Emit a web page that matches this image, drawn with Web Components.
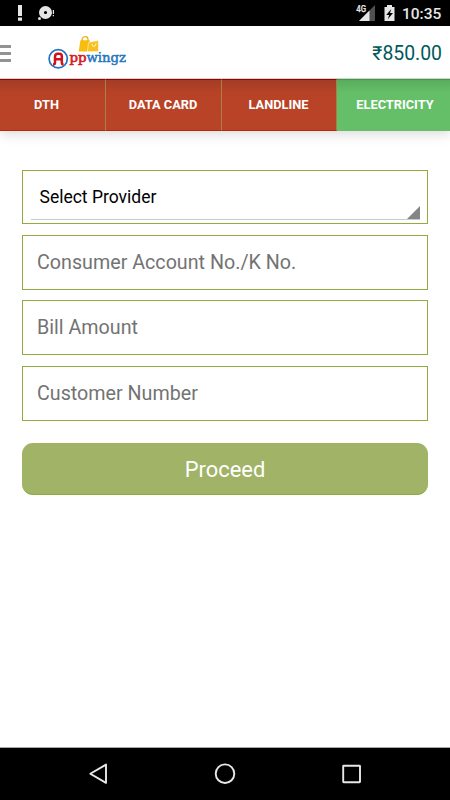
<!DOCTYPE html>
<html lang="en"><head><meta charset="utf-8"><title>Appwingz</title>
<style>html,body{margin:0;height:100%;background:#fff}body{font-family:Roboto,sans-serif;overflow:hidden}</style></head>
<body><bill-app></bill-app>
<script>
const define=(name,html)=>customElements.define(name,class extends HTMLElement{
  constructor(){super();const t=document.createElement('template');t.innerHTML=html;this.attachShadow({mode:'open'}).append(t.content.cloneNode(true));}
});
define('status-bar',`<style>
:host{display:flex;height:26px;background:#000;box-sizing:border-box}
svg{display:block}
.clock{margin:5px 0 0 6px;color:#e6e6e6;font:500 15.5px/18px Roboto,sans-serif;white-space:nowrap}
.net{font:500 9.5px Roboto,sans-serif}
</style>
<svg width="396" height="26" fill="#e6e6e6">
<path d="M18 5h4v11h-4zM18 17.5h4v3.2h-4z"/>
<path fill-rule="evenodd" d="M45.5 6a6.5 6.5 0 1 1 0 13 6.5 6.5 0 0 1 0-13zM45.5 10.9a1.6 1.6 0 1 0 0 3.2 1.6 1.6 0 0 0 0-3.2z"/>
<circle cx="39.5" cy="18.5" r="1.5"/><path d="M52.8 10h1.2v4h-1.2zM52.8 15h1.2v1.2h-1.2z"/>
<path fill="#505050" d="M375 5v16h-16z"/><path d="M369.5 10.5V21H359z"/>
<path fill="#000" d="M355 4h12v9h-12z"/>
<text class="net" x="356.2" y="12.2" textLength="9.8" lengthAdjust="spacingAndGlyphs" stroke="#e6e6e6" stroke-width=".25">4G</text>
<path d="M387 5h5v2h2.5v14h-10V7h2.5z"/><path fill="#000" d="M391.3 9l-5.1 6h3l-1.4 4.2 5.2-6.2h-3z"/>
</svg><span class="clock">10:35</span>`);
define('brand-logo',`<style>:host{display:block;width:80px;height:36px}svg{display:block}text{font-family:"DejaVu Serif",serif;font-weight:700}</style>
<svg width="80" height="36" viewBox="48 34 80 36">
<path fill="#f7bd13" d="M80.4 40.2h9.2v4.2l-2.2 7.2h-8.7z"/>
<path fill="none" stroke="#efb20b" stroke-width="1.3" d="M82.2 42v-3.3q.8-2.4 3.5-2.1 2.3.3 2.3 3V42"/>
<path fill="#f9c01b" stroke="#fff" stroke-width=".5" d="M88.6 42.3l9.8-1.7v11h-11z"/>
<path fill="none" stroke="#fff8c7" stroke-width="1" d="M92 43.8q0 2.6 2 2.6t2-3"/>
<circle cx="58.2" cy="58.8" r="9.1" fill="#fff" stroke="#1f75c1" stroke-width="1.7"/>
<path fill="none" stroke="#d11218" stroke-width="2.5" d="M53 64.6q2 0 2-2V57q0-3.3 2.6-3.3h1.8q2.4 0 2.4 2.4v6.2q0 2.3 1.8 2.3M55 59.2h6.6"/>
<text x="69.4" y="62" font-size="12.8" textLength="17" lengthAdjust="spacingAndGlyphs" fill="#d71920" style="font-weight:400" stroke="#d71920" stroke-width=".65">pp</text>
<text x="86.4" y="62" font-size="12.8" textLength="39.6" lengthAdjust="spacingAndGlyphs" fill="#2376bc" style="font-weight:400" stroke="#2376bc" stroke-width=".5">wingz</text>
</svg>`);
define('app-header',`<style>
:host{display:flex;position:relative;z-index:1;height:53px;box-sizing:border-box;padding:8px 8px 0 0;background:#fff;color:#00595b;border-bottom:1px solid #d8d2d2}
.menu{width:11px;height:17px;margin-top:11px;flex:none}
brand-logo{margin-left:37px}
.amount{margin:8px 0 0 auto;font:400 19.4px/24px Roboto,sans-serif;white-space:nowrap}
</style><svg class="menu" viewBox="0 0 11 17"><path fill="#929292" d="M0 0h11v3H0zM0 7h11v3H0zM0 14h11v3H0z"/></svg><brand-logo></brand-logo><span class="amount"><slot></slot></span>`);
define('bill-tab',`<style>
:host{display:flex;box-sizing:border-box;align-items:center;justify-content:center;color:#fff;
font:700 12.8px/16px Roboto,sans-serif;background:linear-gradient(#a33c26,#b84226 13px,#b84427);border-top:1px solid #8d0505;border-bottom:1px solid #c22306;border-right:1px solid #a98145;white-space:nowrap}
:host([selected]){background:linear-gradient(#59ac5d,#65bf69 13px);border-color:#3d9b43 transparent #67bd6a;border-right:0}
</style><span><slot></slot></span>`);
define('bill-tabs',`<style>
:host{display:grid;grid-template-columns:106px 116px 115px 113px;height:52px;box-shadow:0 3px 12px rgba(0,0,0,.15)}
::slotted(*){padding-right:1px}
::slotted(:first-child){padding-right:12px}::slotted(:last-child){padding-left:4px;padding-right:1px}
</style><slot></slot>`);
define('bill-field',`<style>
:host{display:flex;align-items:center;box-sizing:border-box;height:55px;padding:1px 0 0 14px;border:1px solid #90ac3e;background:#fff;color:#737373;font:400 19.7px/24px Roboto,sans-serif;white-space:nowrap}
</style><span><slot></slot></span>`);
define('provider-select',`<style>
:host{display:block;box-sizing:border-box;height:54px;padding:0 7px 3px 8px;border:1px solid #90ac3e;background:#fff;color:#000}
.inner{display:flex;height:49px;box-sizing:border-box;border-bottom:1px solid #c9c9d1;padding-left:8.5px;align-items:center;justify-content:space-between}
.label{padding-top:4px;font:400 17.5px/22px Roboto,sans-serif;white-space:nowrap}
svg{align-self:flex-end}
</style><div class="inner"><span class="label"><slot></slot></span><svg width="13" height="13"><path fill="#858585" d="M13 0v13H0z"/></svg></div>`);
define('proceed-button',`<style>
:host{display:flex;align-items:center;justify-content:center;box-sizing:border-box;height:52px;padding-top:2px;border-radius:11px;background:#a0b366;border-bottom:1px solid #8eac3e;color:#fff;font:400 21.9px/26px Roboto,sans-serif}
</style><span><slot></slot></span>`);
define('android-nav',`<style>:host{display:block;height:53px;box-sizing:border-box;background:#000;border-top:1px solid #a8a8a8}svg{display:block}</style>
<svg width="450" height="52" viewBox="0 748 450 52" fill="none" stroke="#e8e8e8" stroke-width="1.9" stroke-linejoin="round"><path d="M106 764.6v18.3l-15.7-9.1z"/><circle cx="225" cy="773.7" r="9.3"/><rect x="343.2" y="765.7" width="16.8" height="16.5" rx=".5"/></svg>`);
define('bill-app',`<style>
:host{display:flex;flex-direction:column;width:450px;height:800px;background:#fff}
main{flex:1;display:flex;flex-direction:column;padding:39px 22px 0}
bill-field{margin-top:10.3px}provider-select + bill-field{margin-top:11px}proceed-button{margin-top:22.5px}
</style><status-bar></status-bar><app-header>₹850.00</app-header>
<bill-tabs><bill-tab>DTH</bill-tab><bill-tab>DATA CARD</bill-tab><bill-tab>LANDLINE</bill-tab><bill-tab selected>ELECTRICITY</bill-tab></bill-tabs>
<main><provider-select>Select Provider</provider-select><bill-field>Consumer Account No./K No.</bill-field><bill-field>Bill Amount</bill-field><bill-field>Customer Number</bill-field><proceed-button>Proceed</proceed-button></main><android-nav></android-nav>`);
</script></body></html>
